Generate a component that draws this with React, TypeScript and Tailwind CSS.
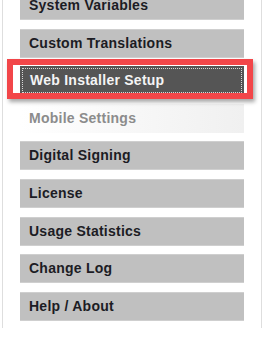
const items = [
  { label: "System Variables", kind: "normal" },
  { label: "Custom Translations", kind: "normal" },
  { label: "Web Installer Setup", kind: "active" },
  { label: "Mobile Settings", kind: "disabled" },
  { label: "Digital Signing", kind: "normal" },
  { label: "License", kind: "normal" },
  { label: "Usage Statistics", kind: "normal" },
  { label: "Change Log", kind: "normal" },
  { label: "Help / About", kind: "normal" },
];

function MenuButton({ label, kind }: { label: string; kind: string }) {
  if (kind === "active") {
    return (
      <div className="h-[29px] w-[224px] bg-[#555555] p-[2px]">
        <div className="flex h-full items-center border border-dotted border-[#d8d8d8] pl-[7px] text-[14px] font-bold tracking-[0.25px] text-[#f4f4f4]">
          {label}
        </div>
      </div>
    );
  }
  if (kind === "disabled") {
    return (
      <div className="flex h-[29px] w-[224px] items-center bg-gradient-to-r from-white to-[#f0f0f0] pl-[9px] text-[14px] font-bold tracking-[0.25px] text-[#8c8c8c]">
        {label}
      </div>
    );
  }
  return (
    <div className="flex h-[29px] w-[224px] items-center border-y border-[#cfcfcf] bg-[#c0c0c0] pl-[9px] text-[14px] font-bold tracking-[0.25px] text-[#1c1c24]">
      {label}
    </div>
  );
}

export default function App() {
  return (
    <div
      className="relative h-[337px] w-[263px] overflow-hidden bg-white"
      style={{ fontFamily: '"Liberation Sans", Arial, sans-serif' }}
    >
      <div className="ml-[2px] h-full w-[260px] border-x border-[#dedede]">
        {/* Menü */}
        <div className="-mt-[9px] flex flex-col gap-[8.6px] pl-[17px]">
          {items.map((it) => (
            <MenuButton key={it.label} label={it.label} kind={it.kind} />
          ))}
        </div>
      </div>

      {/* Vurgu çerçevesi */}
      <div className="absolute left-[7px] top-[59px] h-[40px] w-[246px] border-[6px] border-[#f24649] shadow-[2px_3px_4px_rgba(0,0,0,0.35)]" />
    </div>
  );
}
